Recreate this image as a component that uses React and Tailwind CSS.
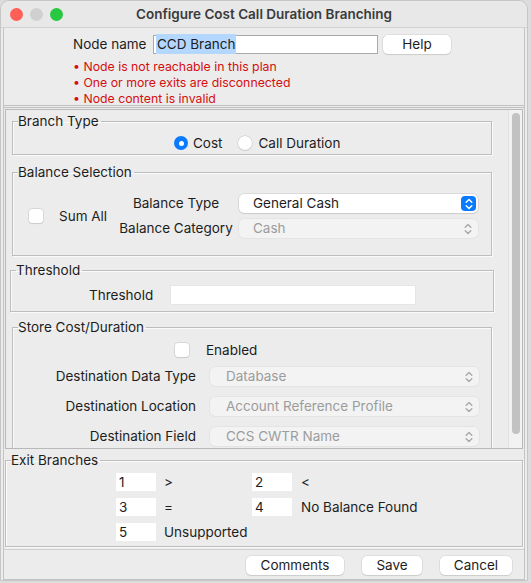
import React from "react";

function Chevrons({ color = "#9a9a9a" }) {
  return (
    <svg width="8" height="12" viewBox="0 0 8 12" fill="none" stroke={color} strokeWidth="1.4" strokeLinecap="round" strokeLinejoin="round">
      <path d="M1.2 4.2 L4 1.5 L6.8 4.2" />
      <path d="M1.2 7.8 L4 10.5 L6.8 7.8" />
    </svg>
  );
}

function Select({ value, enabled = false, width, pl = "pl-[16px]" }) {
  if (enabled) {
    return (
      <div className={`${width} h-[19px] flex items-center justify-between bg-white rounded-[5px] shadow-[0_0_0_0.5px_#c8c8c8,0_1px_1px_rgba(0,0,0,0.12)] ${pl} pr-[2px]`}>
        <span className="text-[#1d1d1d]">{value}</span>
        <span className="w-[15px] h-[15px] rounded-[4px] bg-[#0a7bff] flex items-center justify-center">
          <Chevrons color="#ffffff" />
        </span>
      </div>
    );
  }
  return (
    <div className={`${width} h-[19px] flex items-center justify-between bg-[#f3f3f3] rounded-[5px] shadow-[0_0_0_0.5px_#dcdcdc] ${pl} pr-[6px]`}>
      <span className="text-[#9c9c9c]">{value}</span>
      <Chevrons color="#a8a8a8" />
    </div>
  );
}

function Checkbox() {
  return <span className="block w-[14px] h-[14px] rounded-[3px] bg-white shadow-[0_0_0_0.5px_#c4c4c4,0_1px_1px_rgba(0,0,0,0.1)]" />;
}

function Radio({ checked }) {
  if (checked) {
    return (
      <span className="w-[14px] h-[14px] rounded-full bg-[#0a7bff] flex items-center justify-center">
        <span className="w-[5px] h-[5px] rounded-full bg-white" />
      </span>
    );
  }
  return <span className="block w-[14px] h-[14px] rounded-full bg-white shadow-[0_0_0_0.5px_#c4c4c4,0_1px_1px_rgba(0,0,0,0.1)]" />;
}

function Group({ title, className = "", children }) {
  return (
    <fieldset className={`border border-[#bdbdbd] shadow-[inset_1px_1px_0_#fafafa,1px_1px_0_#fafafa] ${className}`}>
      <legend className="ml-[5px] pr-[2px] leading-[16px] text-[#1d1d1d]">{title}</legend>
      {children}
    </fieldset>
  );
}

function Button({ label, width }) {
  return (
    <div className={`${width} h-[19px] flex items-center justify-center bg-white rounded-[5px] shadow-[0_0_0_0.5px_#cfcfcf,0_1px_1px_rgba(0,0,0,0.15)] text-[#1d1d1d]`}>
      {label}
    </div>
  );
}

function ExitBox({ value }) {
  return <div className="w-[40px] h-[18px] bg-white pl-[3px] leading-[18px]">{value}</div>;
}

export default function App() {
  return (
    <div className="w-[531px] h-[583px] bg-[#dcdcdc] overflow-hidden font-['Inter',sans-serif] text-[13.5px] text-[#1d1d1d]">
      <div className="w-[528px] h-[581px] bg-[#ececec] rounded-t-[9px] border border-[#c6c6c6] flex flex-col">
        {/* title bar */}
        <div className="h-[27px] shrink-0 grid grid-cols-[90px_1fr_90px] items-center border-b border-[#d2d2d2] bg-[#e8e8e8] rounded-t-[9px]">
          <div className="flex items-center gap-[7px] pl-[9px]">
            <span className="w-[13px] h-[13px] rounded-full bg-[#fe5f57]" />
            <span className="w-[13px] h-[13px] rounded-full bg-[#d0d0d0]" />
            <span className="w-[13px] h-[13px] rounded-full bg-[#28c840]" />
          </div>
          <div className="text-center font-semibold text-[13.5px] text-[#3a3a3a]">Configure Cost Call Duration Branching</div>
          <div />
        </div>

        <div className="flex-1 flex flex-col mx-[2px] border-x border-b border-[#c4c4c4]">
          {/* node name panel */}
          <div className="h-[80px] shrink-0 border-b-[3px] border-double border-[#c0c0c0]">
            <div className="flex items-center pt-[6px] pl-[69px]">
              <span className="w-[80px]">Node name</span>
              <div className="w-[225px] h-[19px] bg-white border border-[#a9a9a9] pl-[2px] flex items-center">
                <span className="bg-[#b3d7ff] px-[1px]">CCD Branch</span>
              </div>
              <div className="ml-[5px]">
                <Button label="Help" width="w-[68px]" />
              </div>
            </div>
            <div className="mt-[5px] pl-[69px] text-[12.3px] leading-[16px] text-[#d40f0f]">
              <div>• Node is not reachable in this plan</div>
              <div>• One or more exits are disconnected</div>
              <div>• Node content is invalid</div>
            </div>
          </div>

          {/* scroll pane */}
          <div className="h-[340px] shrink-0 mx-[1px] mt-[1px] border border-[#b8b8b8] flex overflow-hidden">
            <div className="flex-1 overflow-hidden pl-[6px] pr-[16px]">
              <Group title="Branch Type" className="mt-[3px]">
                <div className="flex items-center pl-[161px] pt-[6px] pb-[3px] h-[25px]">
                  <Radio checked />
                  <span className="ml-[5px]">Cost</span>
                  <span className="ml-[15px]"><Radio /></span>
                  <span className="ml-[7px]">Call Duration</span>
                </div>
              </Group>

              <Group title="Balance Selection" className="mt-[9px]">
                <div className="flex items-center pl-[16px] pt-[14px] pb-[17px]">
                  <Checkbox />
                  <span className="ml-[16px] w-[58px]">Sum All</span>
                  <div className="grid grid-cols-[118px_auto] gap-x-[4px] gap-y-[6px] items-center leading-[19px]">
                    <span className="text-center">Balance Type</span>
                    <Select value="General Cash" enabled width="w-[239px]" pl="pl-[14px]" />
                    <span className="text-center">Balance Category</span>
                    <Select value="Cash" width="w-[239px]" pl="pl-[14px]" />
                  </div>
                </div>
              </Group>

              <Group title="Threshold" className="mt-[6px] -mx-[2px]">
                <div className="flex items-center pl-[78px] pt-[7px] pb-[6px]">
                  <span>Threshold</span>
                  <div className="ml-[18px] w-[244px] h-[18px] bg-white shadow-[0_0_0_0.5px_#e0e0e0]" />
                </div>
              </Group>

              <Group title="Store Cost/Duration" className="mt-[7px]">
                <div className="pt-[8px]">
                  <div className="flex items-center pl-[162px] h-[14px]">
                    <Checkbox />
                    <span className="ml-[17px]">Enabled</span>
                  </div>
                  <div className="grid grid-cols-[183px_auto] gap-x-[14px] gap-y-[11px] items-center mt-[10px] leading-[19px]">
                    <span className="text-right">Destination Data Type</span>
                    <Select value="Database" width="w-[269px]" />
                    <span className="text-right">Destination Location</span>
                    <Select value="Account Reference Profile" width="w-[269px]" />
                    <span className="text-right">Destination Field</span>
                    <Select value="CCS CWTR Name" width="w-[269px]" />
                  </div>
                  <div className="h-[20px]" />
                </div>
              </Group>
            </div>
            <div className="w-[14px] shrink-0 border-l border-[#e2e2e2] bg-[#f2f2f2] pt-[3px] pb-[14px] flex justify-center">
              <div className="w-[8px] h-[321px] rounded-full bg-[#c2c2c2]" />
            </div>
          </div>

          {/* exit branches */}
          <Group title="Exit Branches" className="mt-[3px] mx-[1px]">
            <div className="grid grid-cols-[40px_96px_40px_auto] gap-y-[7px] items-center pl-[110px] pt-[5px] pb-[5px] leading-[18px]">
              <ExitBox value="1" />
              <span className="pl-[8px]">&gt;</span>
              <ExitBox value="2" />
              <span className="pl-[9px]">&lt;</span>
              <ExitBox value="3" />
              <span className="pl-[8px]">=</span>
              <ExitBox value="4" />
              <span className="pl-[9px]">No Balance Found</span>
              <ExitBox value="5" />
              <span className="pl-[8px] col-span-3">Unsupported</span>
            </div>
          </Group>

          {/* buttons */}
          <div className="flex-1 border-t border-[#d0d0d0] mt-[2px] flex justify-end items-start gap-[18px] pt-[6px] pr-[12px]">
            <Button label="Comments" width="w-[98px]" />
            <Button label="Save" width="w-[60px]" />
            <Button label="Cancel" width="w-[72px]" />
          </div>
        </div>
      </div>
    </div>
  );
}
